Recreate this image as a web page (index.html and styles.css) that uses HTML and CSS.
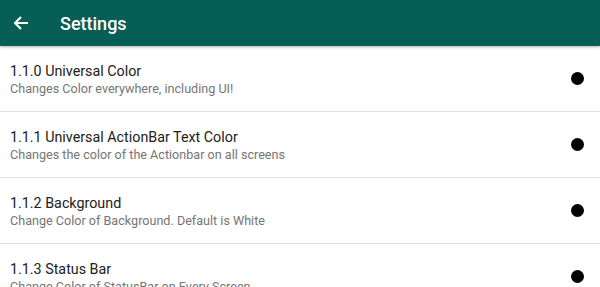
FILE: index.html
```html
<!DOCTYPE html>
<html lang="en">
<head>
  <meta charset="UTF-8">
  <meta name="viewport" content="width=device-width, initial-scale=1.0">
  <title>Settings</title>
  <link rel="stylesheet" href="styles.css">
</head>
<body>
  <!-- Toolbar -->
  <div class="toolbar">
    <svg class="back" width="16" height="16" viewBox="0 0 16 16">
      <path d="M15 8H2M8 2L2 8l6 6" fill="none" stroke="#fff" stroke-width="2"/>
    </svg>
    <span class="toolbar-title">Settings</span>
  </div>

  <div class="list">
    <div class="row">
      <div class="text">
        <div class="title">1.1.0 Universal Color</div>
        <div class="summary">Changes Color everywhere, including UI!</div>
      </div>
      <span class="dot"></span>
    </div>
    <div class="row">
      <div class="text">
        <div class="title">1.1.1 Universal ActionBar Text Color</div>
        <div class="summary">Changes the color of the Actionbar on all screens</div>
      </div>
      <span class="dot"></span>
    </div>
    <div class="row">
      <div class="text">
        <div class="title">1.1.2 Background</div>
        <div class="summary">Change Color of Background. Default is White</div>
      </div>
      <span class="dot"></span>
    </div>
    <div class="row">
      <div class="text">
        <div class="title">1.1.3 Status Bar</div>
        <div class="summary">Change Color of StatusBar on Every Screen</div>
      </div>
      <span class="dot"></span>
    </div>
  </div>
</body>
</html>
```

FILE: styles.css
```css
* { box-sizing: border-box; }
body {
  margin: 0;
  font-family: Roboto, 'Liberation Sans', sans-serif;
  background: #ffffff;
  overflow: hidden;
}
.toolbar {
  height: 46px;
  background-color: #075e54;
  display: flex;
  align-items: center;
  padding-left: 13px;
  box-shadow: 0 1px 3px rgba(0, 0, 0, 0.3);
  position: relative;
  z-index: 1;
}
.back {
  display: block;
}
.toolbar-title {
  color: #ffffff;
  font-size: 18px;
  font-weight: 500;
  margin-left: 31px;
}
.row {
  height: 66px;
  display: flex;
  align-items: flex-start;
  justify-content: space-between;
  padding: 16px 16px 0 10px;
  border-bottom: 1px solid #e0e0e0;
}
.title {
  font-size: 14.3px;
  line-height: 18px;
  color: #212121;
}
.summary {
  font-size: 12.6px;
  line-height: 17px;
  color: #757575;
}
.dot {
  width: 13px;
  height: 13px;
  border-radius: 50%;
  background: #000000;
  margin-top: 10px;
}
```
